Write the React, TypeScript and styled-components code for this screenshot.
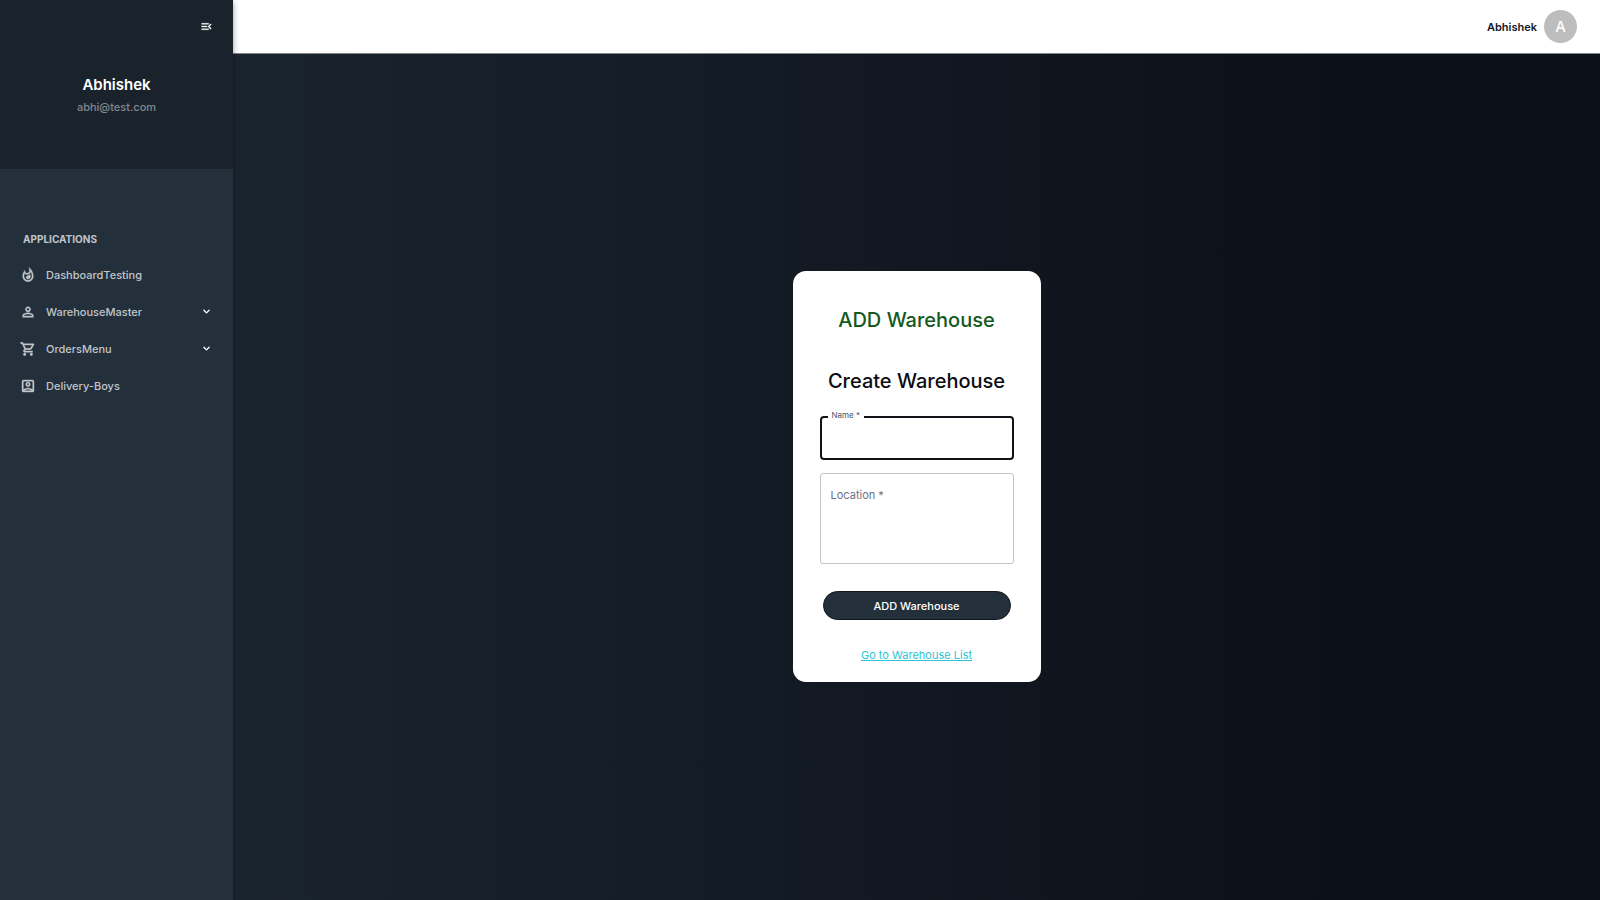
import React from 'react';
import styled, { createGlobalStyle } from 'styled-components';
import {
  MdMenuOpen,
  MdOutlineAccountBox,
  MdOutlineShoppingCart,
  MdOutlineWhatshot,
  MdPersonOutline,
} from 'react-icons/md';
import { HiChevronDown } from 'react-icons/hi';
import type { IconType } from 'react-icons';

const GlobalStyle = createGlobalStyle`
  *, *::before, *::after { box-sizing: border-box; }
  body {
    margin: 0;
    font-family: Inter, "Liberation Sans", sans-serif;
    font-size: 12px;
    line-height: 16px;
    color: #111827;
  }
  button, input, textarea { font: inherit; }
`;

const Shell = styled.div`
  display: flex;
  min-height: 100vh;
`;

const Sidebar = styled.aside`
  position: relative;
  z-index: 2;
  flex: 0 0 233px;
  background: #23303c;
  color: #c1c5ca;
  box-shadow: 0 2px 6px rgba(0, 0, 0, 0.4);
`;

const Profile = styled.section`
  display: flex;
  flex-direction: column;
  align-items: center;
  height: 169px;
  padding: 16px 16px 0;
  background: #1a232c;
`;

const CollapseButton = styled.button`
  align-self: flex-end;
  display: flex;
  margin-bottom: 38px;
  padding: 4px;
  border: 0;
  background: none;
  color: #ffffff;
  font-size: 13px;

  path:not([fill='none']) {
    stroke: currentColor;
    stroke-width: 0.6px;
  }
`;

const ProfileName = styled.h2`
  margin: 0 0 4px;
  color: #ffffff;
  font-size: 15px;
  line-height: 20px;
  font-weight: 600;
`;

const ProfileEmail = styled.p`
  margin: 0;
  color: #82888f;
  font-size: 11px;
  font-weight: 500;
`;

const Nav = styled.nav`
  padding: 62px 8px 0 20px;
`;

const NavHeading = styled.h3`
  margin: 0 0 9px;
  padding-left: 3px;
  font-size: 10px;
  line-height: 16px;
  font-weight: 700;
`;

const NavList = styled.ul`
  margin: 0;
  padding: 0;
  list-style: none;
`;

const NavLink = styled.a`
  display: flex;
  align-items: center;
  gap: 10px;
  height: 37px;
  padding-right: 12px;
  color: inherit;
  font-size: 11px;
  font-weight: 500;
  text-decoration: none;
`;

const NavIcon = styled.span`
  display: flex;
  font-size: 16px;

  path:not([fill='none']) {
    stroke: currentColor;
    stroke-width: 0.6px;
  }
`;

const NavLabel = styled.span`
  flex: 1;
`;

const Chevron = styled(HiChevronDown)`
  color: #ffffff;
  font-size: 13px;
`;

const Content = styled.div`
  flex: 1;
  display: flex;
  flex-direction: column;
`;

const Header = styled.header`
  position: relative;
  z-index: 1;
  display: flex;
  align-items: center;
  justify-content: flex-end;
  gap: 7px;
  height: 53px;
  padding-right: 23px;
  background: #ffffff;
  box-shadow: 0 1px 0 #83878c;
  font-size: 11px;
  font-weight: 600;
`;

const Avatar = styled.span`
  display: grid;
  place-items: center;
  width: 33px;
  height: 33px;
  border-radius: 50%;
  background: #bdbdbd;
  color: #ffffff;
  font-size: 15px;
  font-weight: 500;
`;

const Main = styled.main`
  flex: 1;
  display: grid;
  place-items: center;
  background: linear-gradient(to right, #1a242e, #0b0f17 86%);
`;

const Card = styled.form`
  display: flex;
  flex-direction: column;
  width: 248px;
  padding: 35px 27px 19px;
  border-radius: 13px;
  background: #ffffff;
`;

const Title = styled.h1<{ $color: string }>`
  margin: 0 0 33px;
  color: ${(p) => p.$color};
  font-size: 20px;
  line-height: 28px;
  font-weight: 500;
  text-align: center;
  white-space: nowrap;
`;

const Subtitle = styled(Title).attrs({ as: 'h2' })`
  margin-bottom: 21px;
`;

const Field = styled.div`
  position: relative;
  display: flex;
  margin-bottom: 13px;
`;

const FieldLabel = styled.label<{ $floating?: boolean }>`
  position: absolute;
  left: ${(p) => (p.$floating ? 8 : 11)}px;
  top: ${(p) => (p.$floating ? -7 : 14)}px;
  padding: 0 ${(p) => (p.$floating ? 4 : 0)}px;
  background: #ffffff;
  color: ${(p) => (p.$floating ? '#4b5563' : '#6b7280')};
  font-size: ${(p) => (p.$floating ? 8 : 11)}px;
  line-height: ${(p) => (p.$floating ? 12 : 16)}px;
`;

const TextInput = styled.input`
  width: 100%;
  height: 44px;
  padding: 0 11px;
  border: 2px solid #111318;
  border-radius: 4px;
  outline: 0;
`;

const TextArea = styled.textarea`
  width: 100%;
  height: 91px;
  padding: 13px 11px;
  border: 1px solid #c4c4c4;
  border-radius: 3px;
  outline: 0;
  resize: none;
`;

const SubmitButton = styled.button`
  height: 29px;
  margin: 14px 3px 27px;
  border: 1px solid #10161d;
  border-radius: 15px;
  background: #23303c;
  color: #ffffff;
  font-size: 11px;
  font-weight: 500;
`;

const ListLink = styled.a`
  align-self: center;
  color: #2dc5d3;
  font-size: 11px;
  text-decoration: underline;
`;

const navItems: { label: string; icon: IconType; expandable?: boolean }[] = [
  { label: 'DashboardTesting', icon: MdOutlineWhatshot },
  { label: 'WarehouseMaster', icon: MdPersonOutline, expandable: true },
  { label: 'OrdersMenu', icon: MdOutlineShoppingCart, expandable: true },
  { label: 'Delivery-Boys', icon: MdOutlineAccountBox },
];

export default function App() {
  return (
    <>
      <GlobalStyle />
      <Shell>
        <Sidebar>
          <Profile>
            <CollapseButton type="button" aria-label="Collapse menu">
              <MdMenuOpen />
            </CollapseButton>
            <ProfileName>Abhishek</ProfileName>
            <ProfileEmail>abhi@test.com</ProfileEmail>
          </Profile>
          <Nav>
            <NavHeading>APPLICATIONS</NavHeading>
            <NavList>
              {navItems.map(({ label, icon: Icon, expandable }) => (
                <li key={label}>
                  <NavLink href="#">
                    <NavIcon>
                      <Icon />
                    </NavIcon>
                    <NavLabel>{label}</NavLabel>
                    {expandable && <Chevron />}
                  </NavLink>
                </li>
              ))}
            </NavList>
          </Nav>
        </Sidebar>
        <Content>
          <Header>
            <span>Abhishek</span>
            <Avatar>A</Avatar>
          </Header>
          <Main>
            <Card>
              <Title $color="#14591d">ADD Warehouse</Title>
              <Subtitle $color="#0b0d12">Create Warehouse</Subtitle>
              <Field>
                <TextInput id="name" required />
                <FieldLabel htmlFor="name" $floating>Name *</FieldLabel>
              </Field>
              <Field>
                <TextArea id="location" required />
                <FieldLabel htmlFor="location">Location *</FieldLabel>
              </Field>
              <SubmitButton type="submit">ADD Warehouse</SubmitButton>
              <ListLink href="#">Go to Warehouse List</ListLink>
            </Card>
          </Main>
        </Content>
      </Shell>
    </>
  );
}
